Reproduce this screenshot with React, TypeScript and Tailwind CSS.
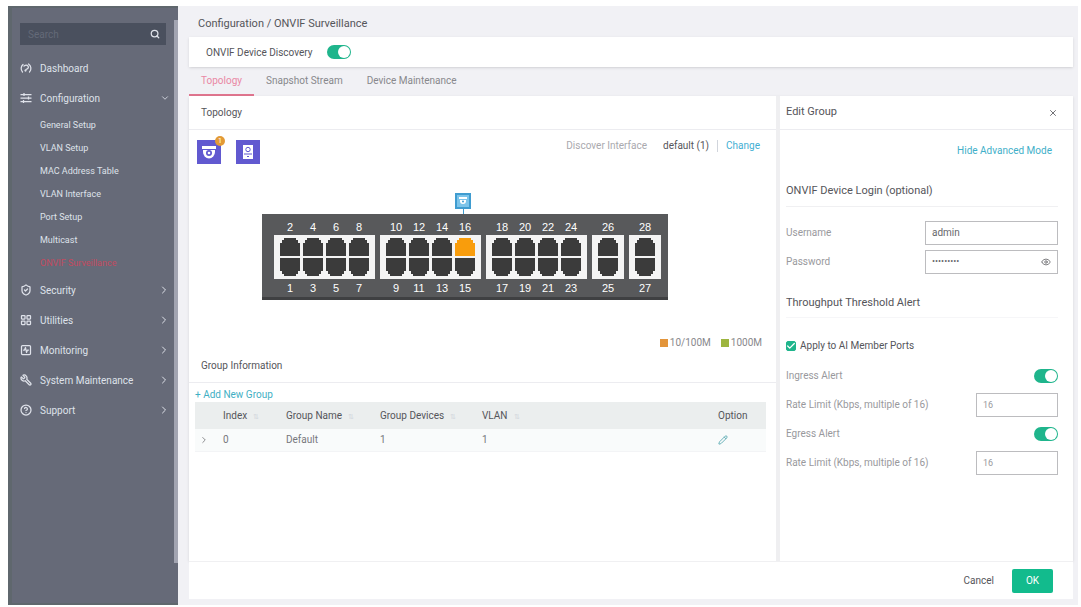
import { useState } from "react";
import {
  ChevronDown,
  ChevronRight,
  CircleHelp,
  Eye,
  LayoutGrid,
  Pencil,
  Search,
  ShieldCheck,
  SquareActivity,
  Wrench,
  X,
  Check,
} from "lucide-react";

const configLinks = [
  "General Setup",
  "VLAN Setup",
  "MAC Address Table",
  "VLAN Interface",
  "Port Setup",
  "Multicast",
  "ONVIF Surveillance",
];

const menuItems = [
  { label: "Security", Icon: ShieldCheck },
  { label: "Utilities", Icon: LayoutGrid },
  { label: "Monitoring", Icon: SquareActivity },
  { label: "System Maintenance", Icon: Wrench },
  { label: "Support", Icon: CircleHelp },
];

const portGroups = [
  [2, 4, 6, 8],
  [10, 12, 14, 16],
  [18, 20, 22, 24],
  [26],
  [28],
];

const tabs = ["Topology", "Snapshot Stream", "Device Maintenance"];

function Switch({ label }: { label: string }) {
  const [on, setOn] = useState(true);

  return (
    <input
      type="checkbox"
      role="switch"
      aria-label={label}
      checked={on}
      onChange={() => setOn((value) => !value)}
      className="relative h-3.5 w-6 shrink-0 appearance-none rounded-full bg-gray-300 before:absolute before:top-px before:left-px before:size-3 before:rounded-full before:bg-white checked:bg-[#1fb58c] checked:before:left-[11px]"
    />
  );
}

function Port({ active, flipped }: { active?: boolean; flipped?: boolean }) {
  return (
    <svg
      viewBox="0 0 20 18"
      className={`h-[18px] w-5 ${flipped ? "rotate-180" : ""}`}
      fill={active ? "#f99d0c" : "#3b3b3b"}
    >
      <path d="M4 0h12v2h2v3h2v13H0V5h2V2h2z" />
    </svg>
  );
}

function DashboardIcon() {
  return (
    <svg
      viewBox="0 0 24 24"
      className="mr-2 size-3"
      fill="none"
      stroke="currentColor"
      strokeWidth={2.5}
      strokeLinecap="round"
    >
      <path d="M5 20a10.500 10.500 0 0 1 1-15M17 4a10.500 10.500 0 0 1 2 16M8 8q5-4 8 0t-4 7" />
      <circle cx="11" cy="17" r="1" />
    </svg>
  );
}

function ConfigurationIcon() {
  return (
    <svg viewBox="0 0 24 24" className="mr-2 size-3" stroke="currentColor" strokeWidth={2.5}>
      <path d="M1 5h22M1 12h22M1 19h22M8 2v6M17 9v6M7 16v6" />
    </svg>
  );
}

function DomeCamera({ className }: { className: string }) {
  return (
    <svg viewBox="0 0 24 24" className={className}>
      <path d="M5 6h14v3H5z" fill="#fff" />
      <path d="M6 10h12v2a6 6.500 0 0 1-12 0z" fill="#fff" />
      <circle cx="12" cy="13" r="3" fill="#6159d0" />
      <circle cx="12" cy="13" r="1.300" fill="#fff" />
    </svg>
  );
}

function PortGroup({ ports }: { ports: number[] }) {
  return (
    <div className="font-['Liberation_Sans',sans-serif] text-[11px] leading-3 text-white">
      <div className="flex gap-[3px] px-1.5 pb-0.5">
        {ports.map((port) => (
          <span key={port} className="w-5 text-center">
            {port}
          </span>
        ))}
      </div>
      <div className="flex gap-[3px] bg-[#f4f4f4] px-1.5 py-[3px]">
        {ports.map((port) => (
          <div key={port} className="flex flex-col gap-0.5">
            <Port active={port === 16} />
            <Port flipped />
          </div>
        ))}
      </div>
      <div className="flex gap-[3px] px-1.5 pt-[3px]">
        {ports.map((port) => (
          <span key={port} className="w-5 text-center">
            {port - 1}
          </span>
        ))}
      </div>
    </div>
  );
}

function Sidebar() {
  return (
    <aside className="flex w-[170px] shrink-0 border-y-2 border-l-4 border-[#5f676d] bg-[#666a78] text-[#dfe2ea]">
      <div className="flex-1 pt-[15px]">
        <label className="mr-2 ml-2 flex h-[22px] items-center bg-[#4a505e] pr-1.5 pl-2">
          <input
            type="search"
            placeholder="Search"
            aria-label="Search"
            className="w-full min-w-0 flex-1 outline-none placeholder:text-[#646a78]"
          />
          <Search className="size-2.5" strokeWidth={3} />
        </label>
        <nav className="pt-2">
          <a href="#dashboard" className="flex h-[30px] items-center pl-2">
            <DashboardIcon />
            Dashboard
          </a>
          <a href="#configuration" className="flex h-[30px] items-center pr-1 pl-2">
            <ConfigurationIcon />
            Configuration
            <ChevronDown className="ml-auto size-2.5" />
          </a>
          <ul className="pt-px text-[9px]">
            {configLinks.map((link) => (
              <li key={link}>
                <a
                  href="#config"
                  className={`flex h-[23px] items-center pl-7 ${
                    link === "ONVIF Surveillance" ? "text-[#c24a60]" : ""
                  }`}
                >
                  {link}
                </a>
              </li>
            ))}
          </ul>
          {menuItems.map(({ label, Icon }) => (
            <a key={label} href="#menu" className="flex h-[30px] items-center pr-1 pl-2">
              <Icon
                className={`mr-2 size-3 ${Icon === Wrench ? "-scale-x-100" : ""}`}
                strokeWidth={2.5}
              />
              {label}
              <ChevronRight className="ml-auto size-3" />
            </a>
          ))}
        </nav>
      </div>
      <div className="mt-3 mb-10 w-1 bg-[#a2a4b1]"></div>
    </aside>
  );
}

function TopologyPanel() {
  return (
    <section className="min-w-0 flex-1">
      <h2 className="flex h-[34px] items-center border-b border-[#ececf0] pl-3">
        Topology
      </h2>
      <div className="flex items-start justify-between pt-2.5 pr-4 pl-2">
        <div className="flex gap-[15px]">
          <button type="button" aria-label="Cameras" className="relative size-6 bg-[#6159d0]">
            <DomeCamera className="size-6" />
            <span className="absolute -top-1 -right-1 size-2.5 rounded-full bg-[#e39a35] text-center text-[7px] leading-[10px] text-white">
              1
            </span>
          </button>
          <button type="button" aria-label="Recorders" className="size-6 bg-[#6159d0]">
            <svg viewBox="0 0 24 24" className="size-6">
              <path d="M7 5h10v14H7z" fill="#fff" />
              <circle cx="12" cy="9.500" r="2.200" fill="none" stroke="#6159d0" />
              <path d="M8 14h8M11 16.500h2" stroke="#6159d0" />
            </svg>
          </button>
        </div>
        <div className="flex items-center leading-3">
          <span className="mr-4 text-[#a9a9ae]">Discover Interface</span>
          <span className="border-r border-gray-300 pr-2">default (1)</span>
          <button type="button" className="pl-2 text-[#3fafd4]">
            Change
          </button>
        </div>
      </div>

      <div className="mt-[29px] ml-[73px] w-fit">
        <div className="ml-[193px] flex w-4 flex-col items-center">
          <div className="size-4 border-2 border-[#3f9cd0] bg-[#7cc4ea]">
            <svg viewBox="0 0 12 12" className="size-3">
              <path d="M2 2h8v2H2zM3 5h6v1a3 3 0 0 1-6 0z" fill="#fff" />
              <circle cx="6" cy="6.500" r="1" fill="#3f9cd0" />
            </svg>
          </div>
          <div className="h-[5px] w-px bg-[#3f9cd0]"></div>
        </div>
        <div className="flex gap-[5px] border-b-3 border-[#3f4042] bg-[#58595b] pt-[7px] pr-[7px] pb-[3px] pl-3">
          {portGroups.map((ports) => (
            <PortGroup key={ports[0]} ports={ports} />
          ))}
        </div>
      </div>

      <div className="mt-[37px] flex justify-end gap-2.5 pr-3.5 leading-3 text-[#88888c]">
        <span className="flex items-center gap-0.5">
          <i className="size-2 bg-[#e3953b]"></i>10/100M
        </span>
        <span className="flex items-center gap-0.5">
          <i className="size-2 bg-[#9db53f]"></i>1000M
        </span>
      </div>

      <h2 className="flex h-[34px] items-center border-b border-[#ececf0] pl-3">
        Group Information
      </h2>
      <button type="button" className="mt-[5px] ml-1.5 block leading-3.5 text-[#3fafc4]">
        + Add New Group
      </button>
      <div className="pr-2.5 pl-1.5">
        <table className="w-full table-fixed text-left">
          <thead className="bg-[#ebeeee]">
            <tr className="h-[27px]">
              <th className="w-7"></th>
              {["Index", "Group Name", "Group Devices", "VLAN"].map((name, i) => (
                <th
                  key={name}
                  className={`font-normal ${["w-[63px]", "w-[94px]", "w-[102px]", ""][i]}`}
                >
                  {name}
                  <span className="pl-1.5 text-[7px] text-gray-300">⇅</span>
                </th>
              ))}
              <th className="w-12 font-normal">Option</th>
            </tr>
          </thead>
          <tbody className="bg-[#f9fbfb] text-[#77777b]">
            <tr className="h-[22px] border-b border-gray-100">
              <td className="pl-1">
                <ChevronRight className="size-2.5" />
              </td>
              <td>0</td>
              <td>Default</td>
              <td>1</td>
              <td>1</td>
              <td>
                <button type="button" aria-label="Edit" className="block">
                  <Pencil className="size-2.5 text-[#4fa5ad]" />
                </button>
              </td>
            </tr>
          </tbody>
        </table>
      </div>
    </section>
  );
}

function AlertFields({ name }: { name: string }) {
  const id = name.toLowerCase().replace(" ", "-");

  return (
    <>
      <div className="flex h-[29px] items-center justify-between">
        <span>{name}</span>
        <Switch label={name} />
      </div>
      <div className="flex h-[29px] items-center justify-between">
        <label htmlFor={id}>Rate Limit (Kbps, multiple of 16)</label>
        <input
          id={id}
          defaultValue="16"
          className="h-6 w-[82px] border border-[#bcbcbf] px-1.5 text-[9px]"
        />
      </div>
    </>
  );
}

function EditGroup() {
  return (
    <section className="w-[297px] shrink-0 border-l-4 border-[#efeff1]">
      <div className="flex h-[34px] items-center justify-between border-b border-[#ececf0] pr-[15px] pl-1.5">
        <h2 className="text-[11px]">Edit Group</h2>
        <button type="button" aria-label="Close">
          <X className="size-2.5" />
        </button>
      </div>
      <div className="pr-[15px] pl-1.5">
        <div className="flex h-10 items-center justify-end pr-1.5">
          <button type="button" className="text-[#3fafc9]">
            Hide Advanced Mode
          </button>
        </div>
        <h3 className="flex h-[37px] items-center border-b border-[#f0f0f2] pt-1.5 text-[11px]">
          ONVIF Device Login (optional)
        </h3>
        <div className="pt-[11px] text-[#99999d]">
          <div className="flex h-[29px] items-center justify-between">
            <label htmlFor="username">Username</label>
            <input
              id="username"
              defaultValue="admin"
              className="h-6 w-[133px] border border-[#bcbcbf] px-1.5 text-[#66666a]"
            />
          </div>
          <div className="flex h-[29px] items-center justify-between">
            <label htmlFor="password">Password</label>
            <div className="flex h-6 w-[133px] items-center border border-[#bcbcbf] px-1.5 text-[#66666a]">
              <input
                id="password"
                type="password"
                defaultValue="password1"
                className="w-full min-w-0 flex-1 text-[9px] outline-none"
              />
              <button type="button" aria-label="Show password">
                <Eye className="size-2.5" />
              </button>
            </div>
          </div>
        </div>
        <h3 className="flex h-[42px] items-center border-b border-[#f6f6f8] pt-3.5 text-[11px]">
          Throughput Threshold Alert
        </h3>
        <label className="mt-[13px] flex h-[29px] items-center gap-1">
          <span className="grid">
            <input
              type="checkbox"
              defaultChecked
              className="col-start-1 row-start-1 size-2.5 appearance-none rounded-xs border border-[#1fb58c] checked:bg-[#1fb58c]"
            />
            <Check
              className="pointer-events-none col-start-1 row-start-1 size-2.5 text-white"
              strokeWidth={3}
            />
          </span>
          Apply to AI Member Ports
        </label>
        <div className="pt-px text-[#99999d]">
          <AlertFields name="Ingress Alert" />
          <AlertFields name="Egress Alert" />
        </div>
      </div>
    </section>
  );
}

export default function App() {
  const [activeTab, setActiveTab] = useState("Topology");

  return (
    <div className="flex min-h-screen bg-white pt-1.5 pr-[3px] pb-0.5 pl-2 font-['Roboto',sans-serif] text-[10px] text-[#55555a]">
      <Sidebar />
      <main className="flex min-w-0 flex-1 flex-col bg-[#f1f1f5] pr-[5px] pb-1.5 pl-[11px]">
        <h1 className="flex h-[31px] items-center pt-1.5 pl-[9px] text-[11px]">
          Configuration / ONVIF Surveillance
        </h1>
        <div className="flex h-[30px] items-center gap-3.5 bg-white pl-[17px] shadow-sm">
          ONVIF Device Discovery
          <Switch label="ONVIF Device Discovery" />
        </div>
        <div className="flex h-[29px] text-[#88888c]">
          {tabs.map((tab) => (
            <button
              key={tab}
              type="button"
              onClick={() => setActiveTab(tab)}
              className={`border-b-2 px-3 ${
                activeTab === tab
                  ? "border-[#e0758f] text-[#ea88a4]"
                  : "border-transparent"
              }`}
            >
              {tab}
            </button>
          ))}
        </div>
        <div className="flex flex-1 bg-white shadow-sm">
          <TopologyPanel />
          <EditGroup />
        </div>
        <div className="flex h-[38px] items-center justify-end gap-[18px] border-t border-[#f0f0f2] bg-white pr-5">
          <button type="button">Cancel</button>
          <button type="button" className="h-6 w-[41px] rounded-xs bg-[#12bb8d] text-white">
            OK
          </button>
        </div>
      </main>
    </div>
  );
}
